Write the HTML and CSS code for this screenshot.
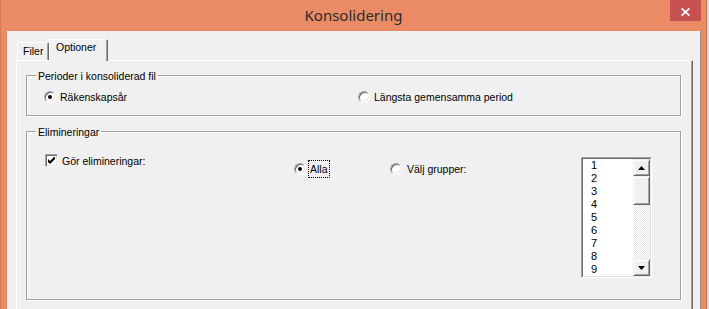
FILE: index.html
```html
<!DOCTYPE html>
<html lang="sv">
<head>
<meta charset="utf-8">
<title>Konsolidering</title>
<link rel="stylesheet" href="styles.css">
</head>
<body>
<div class="window">
  <div class="titlebar">
    <span class="title">Konsolidering</span>
    <div class="close">
      <svg width="9" height="8" viewBox="0 0 9 8"><path d="M0.6 0.4 L8.4 7.6 M8.4 0.4 L0.6 7.6" stroke="#fff" stroke-width="1.7" fill="none"/></svg>
    </div>
  </div>
  <div class="client">
    <div class="tabs">
      <div class="tab">Filer</div>
      <div class="tab active">Optioner</div>
    </div>
    <div class="panel">
      <div class="group g1">
        <span class="group-label">Perioder i konsoliderad fil</span>
        <div class="opt-row">
          <div class="opt w-first"><span class="radio checked"></span><span>Räkenskapsår</span></div>
          <div class="opt"><span class="radio"></span><span>Längsta gemensamma period</span></div>
        </div>
      </div>
      <div class="group g2">
        <span class="group-label">Elimineringar</span>
        <div class="opt check-opt">
          <span class="checkbox"><svg width="7" height="7" viewBox="0 0 7 7"><polygon points="0,2 2,4 6,0 7,0 7,2 2,7 0,5" fill="#000"/></svg></span>
          <span>Gör elimineringar:</span>
        </div>
        <div class="opt alla"><span class="radio checked"></span><span class="focus">Alla</span></div>
        <div class="opt valj"><span class="radio"></span><span>Välj grupper:</span></div>
        <div class="listbox">
          <div class="listbox-inner">
            <ul class="items">
              <li>1</li><li>2</li><li>3</li><li>4</li><li>5</li><li>6</li><li>7</li><li>8</li><li>9</li>
            </ul>
            <div class="scrollbar">
              <div class="sbtn"><svg width="7" height="4" viewBox="0 0 7 4"><polygon points="0,4 3.5,0 7,4" fill="#000"/></svg></div>
              <div class="thumb"></div>
              <div class="track"></div>
              <div class="sbtn"><svg width="7" height="4" viewBox="0 0 7 4"><polygon points="0,0 3.5,4 7,0" fill="#000"/></svg></div>
            </div>
          </div>
        </div>
      </div>
    </div>
  </div>
</div>
</body>
</html>
```

FILE: styles.css
```css
* { box-sizing: border-box; margin: 0; padding: 0; }
html, body { width: 709px; height: 309px; overflow: hidden; }
body {
  background: #dcdcdc;
  font-family: "Liberation Sans", Arial, sans-serif;
  font-size: 10.5px;
  color: #000;
}
.window {
  width: 707px;
  height: 309px;
  background: #EA8B66;
  border-left: 1px solid #d97b58;
  border-right: 1px solid #c96f4e;
  display: flex;
  flex-direction: column;
}
.titlebar {
  position: relative;
  height: 31px;
  flex: none;
  padding-top: 5px;
  text-align: center;
  font-family: "Noto Sans", sans-serif;
  font-size: 15px;
  line-height: 20px;
  color: #2b2b2b;
}
.close {
  position: absolute;
  top: 0;
  right: 5px;
  width: 31px;
  height: 21px;
  background: #C75050;
  display: flex;
  align-items: center;
  justify-content: center;
  padding-top: 2px;
}
.close svg { display: block; }
.client {
  flex: 1;
  margin: 0 5px 0 6px;
  background: #F0F0F0;
  border-right: 1px solid #8e8e8e;
  padding: 8px 7px 0 9px;
  overflow: hidden;
}
.tabs {
  display: flex;
  align-items: flex-end;
  height: 21px;
  padding-left: 1px;
}
.tab {
  width: 32px;
  height: 18px;
  padding: 1px 0 0 5px;
  border: 1px solid;
  border-bottom: none;
  border-color: #fff #696969 transparent #fff;
  border-radius: 2px 2px 0 0;
  box-shadow: inset -1px 0 0 #a0a0a0;
  line-height: 14px;
  background: #F0F0F0;
}
.tab.active {
  width: 59px;
  height: 22px;
  padding: 0 0 0 6px;
  margin-bottom: -1px;
  position: relative;
  z-index: 1;
}
.panel {
  height: 260px;
  background: #F0F0F0;
  border-top: 1px solid #fff;
  border-left: 1px solid #fff;
  border-right: 1px solid #696969;
  box-shadow: inset -1px 0 0 #a0a0a0;
  padding: 14px 11px 0 9px;
}
.group {
  position: relative;
  border: 1px solid #a0a0a0;
  box-shadow: inset 1px 1px 0 #fff, 1px 1px 0 #fff;
}
.group-label {
  position: absolute;
  top: -7px;
  left: 9px;
  padding: 0 2px;
  background: #F0F0F0;
  line-height: 14px;
}
.g1 {
  height: 41px;
  padding: 15px 0 0 17px;
}
.opt-row { display: flex; }
.opt {
  display: flex;
  align-items: center;
  gap: 4px;
  height: 12px;
}
.w-first { width: 314px; }
.g2 {
  height: 169px;
  margin-top: 15px;
  padding-left: 18px;
  display: flex;
  align-items: flex-start;
}
.check-opt {
  width: 249px;
  height: 13px;
  margin-top: 22px;
}
.alla {
  width: 96px;
  height: 18px;
  margin-top: 28px;
  gap: 2px;
}
.valj {
  width: 191px;
  height: 18px;
  margin-top: 28px;
  gap: 5px;
}
.focus {
  border: 1px dotted #000;
  padding: 1px 1px;
  line-height: 14px;
}
.radio {
  position: relative;
  flex: none;
  width: 12px;
  height: 12px;
  border-radius: 50%;
  border: 1px solid;
  border-color: #a0a0a0 #fff #fff #a0a0a0;
  box-shadow: inset 1px 1px 0 #696969, inset -1px -1px 0 #e3e3e3;
  background: #fff;
  display: flex;
  align-items: center;
  justify-content: center;
}
.radio.checked::after {
  content: "";
  width: 4px;
  height: 4px;
  border-radius: 50%;
  background: #000;
}
.checkbox {
  flex: none;
  width: 13px;
  height: 13px;
  border: 1px solid;
  border-color: #a0a0a0 #fff #fff #a0a0a0;
  box-shadow: inset 1px 1px 0 #696969, inset -1px -1px 0 #e3e3e3;
  background: #fff;
  display: flex;
  align-items: center;
  justify-content: center;
}
.checkbox svg { display: block; }
.listbox {
  width: 71px;
  height: 121px;
  margin-top: 25px;
  border: 1px solid;
  border-color: #a0a0a0 #fff #fff #a0a0a0;
}
.listbox-inner {
  height: 100%;
  display: flex;
  background: #fff;
  border: 1px solid;
  border-color: #696969 #e3e3e3 #e3e3e3 #696969;
}
.items {
  flex: 1;
  list-style: none;
  padding-left: 8px;
  line-height: 13px;
  font-size: 11px;
}
.scrollbar {
  width: 17px;
  display: flex;
  flex-direction: column;
}
.sbtn, .thumb {
  background: #F0F0F0;
  border: 1px solid;
  border-color: #f0f0f0 #696969 #696969 #f0f0f0;
  box-shadow: inset 1px 1px 0 #fff, inset -1px -1px 0 #a0a0a0;
}
.sbtn {
  height: 17px;
  display: flex;
  align-items: center;
  justify-content: center;
}
.sbtn svg { display: block; }
.thumb { height: 29px; }
.track {
  flex: 1;
  background: repeating-conic-gradient(#ffffff 0 25%, #e6e6e6 0 50%) 0 0 / 2px 2px;
}
```
